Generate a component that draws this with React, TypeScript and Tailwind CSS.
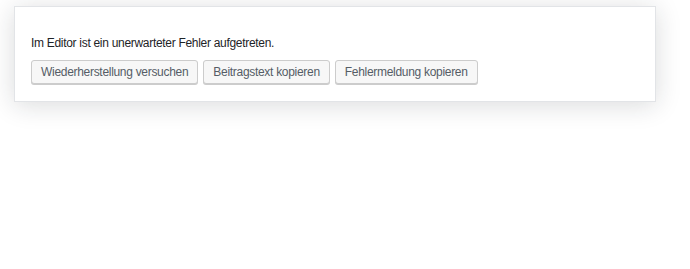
export default function App() {
  const buttons = [
    "Wiederherstellung versuchen",
    "Beitragstext kopieren",
    "Fehlermeldung kopieren",
  ];

  return (
    <div className="w-[690px] h-[269px] bg-white pt-[6px] pl-[14px] font-['Liberation_Sans',Arial,sans-serif] tracking-[-0.3px]">
      <div className="w-[642px] h-[96px] bg-white border border-[#e2e4e7] shadow-[0_3px_24px_rgba(25,30,35,0.16)] pl-[16px] pt-[28px]">
        <p className="text-[12px] leading-[16px] text-[#1e2327]">
          Im Editor ist ein unerwarteter Fehler aufgetreten.
        </p>
        <div className="mt-[9px] flex gap-[5px]">
          {buttons.map((label) => (
            <button
              key={label}
              type="button"
              className="h-[24px] px-[9px] rounded-[3px] border border-[#cccccc] bg-[#f7f7f7] shadow-[0_1px_0_#cccccc] text-[12px] leading-[22px] text-[#555d66] whitespace-nowrap"
            >
              {label}
            </button>
          ))}
        </div>
      </div>
    </div>
  );
}
